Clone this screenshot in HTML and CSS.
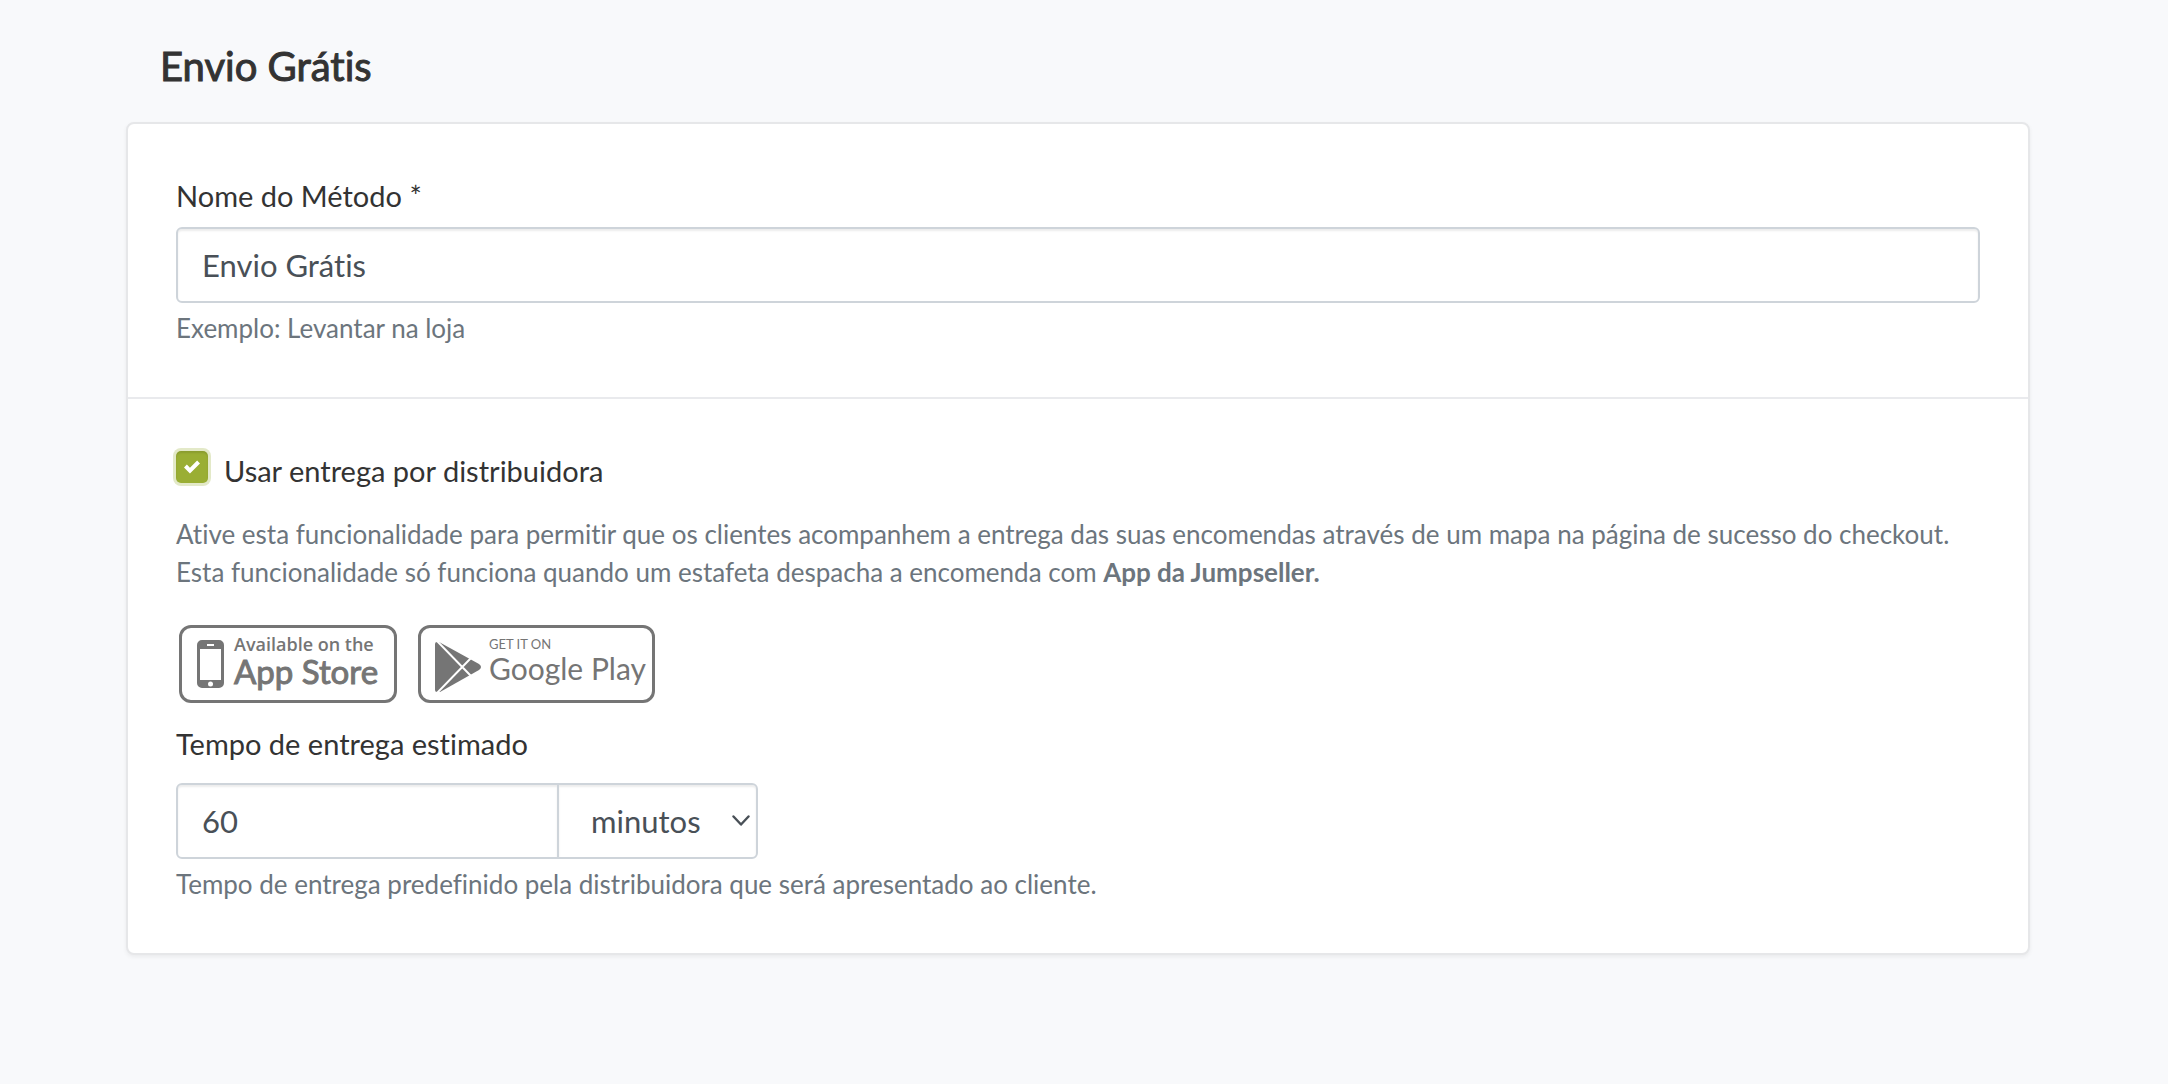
FILE: index.html
```
<!DOCTYPE html>
<html lang="pt">
<head>
    <meta charset="UTF-8">
    <meta name="viewport" content="width=device-width, initial-scale=1.0">
    <title>Envio Grátis</title>
    <link rel="stylesheet" href="styles.css">
</head>
<body>

    <main class="container">
        <h1>Envio Grátis</h1>

        <form class="card">
            <section class="card-section">
                <label class="form-label" for="name">Nome do Método *</label>
                <input class="form-control" type="text" id="name" name="name" value="Envio Grátis" required>
                <p class="form-text">Exemplo: Levantar na loja</p>
            </section>

            <section class="card-section">
                <div class="form-check">
                    <input type="checkbox" id="delivery" name="delivery" checked>
                    <label for="delivery">Usar entrega por distribuidora</label>
                </div>

                <p class="description">Ative esta funcionalidade para permitir que os clientes acompanhem a entrega das suas encomendas através de um mapa na página de sucesso do checkout.<br>
                Esta funcionalidade só funciona quando um estafeta despacha a encomenda com <strong>App da Jumpseller.</strong></p>

                <div class="stores">
                    <a class="store app-store" href="#">
                        <svg class="phone-icon" width="27" height="48" viewBox="0 0 27 48" aria-hidden="true">
                            <path fill="#757575" fill-rule="evenodd" d="M5 0h17a5 5 0 0 1 5 5v38a5 5 0 0 1-5 5H5a5 5 0 0 1-5-5V5a5 5 0 0 1 5-5zM3 9v31h21V9zM10 4v2h7V4z"/>
                            <circle cx="13.5" cy="44" r="2.5" fill="#fff"/>
                        </svg>
                        <span class="store-text">
                            <span class="store-small">Available on the</span>
                            <span class="store-name">App Store</span>
                        </span>
                    </a>
                    <a class="store google-play" href="#">
                        <svg class="play-icon" width="47" height="50" viewBox="0 0 47 50" aria-hidden="true">
                            <path fill="#757575" d="M0 2Q0 0 2 0h2l40 22q4 3 0 6L5 50H2q-2 0-2-2z"/>
                            <path fill="none" stroke="#fff" stroke-width="2" d="M2-1l34 35M2 51l34-35"/>
                        </svg>
                        <span class="store-text">
                            <span class="store-small">GET IT ON</span>
                            <span class="store-name">Google Play</span>
                        </span>
                    </a>
                </div>

                <label class="form-label" for="time">Tempo de entrega estimado</label>
                <div class="input-group">
                    <input class="form-control" type="text" id="time" name="time" value="60">
                    <select class="form-control" name="unit" aria-label="Unidade">
                        <option selected>minutos</option>
                        <option>horas</option>
                        <option>dias</option>
                    </select>
                    <svg class="chevron" width="18" height="12" viewBox="0 0 18 12" aria-hidden="true">
                        <path d="M1.500 1.500L9 9.500l7.500-8" fill="none" stroke="#495057" stroke-width="2.400" stroke-linecap="round" stroke-linejoin="round"/>
                    </svg>
                </div>
                <p class="form-text">Tempo de entrega predefinido pela distribuidora que será apresentado ao cliente.</p>
            </section>
        </form>
    </main>

</body>
</html>
```
FILE: styles.css
```
* {
    box-sizing: border-box;
}

body {
    margin: 0;
    background-color: #f8f9fb;
    font-family: Lato, "Liberation Sans", sans-serif;
    font-size: 29px;
    line-height: 40px;
    font-variant-ligatures: none;
    color: #333;
}

.container {
    padding: 42px 138px 42px 126px;
}

h1 {
    margin: 0 0 32px;
    padding: 0 34px;
    font-size: 40px;
    line-height: 48px;
    font-weight: 400;
    -webkit-text-stroke: 1px #333;
}

/* Caixa principal */
.card {
    background-color: #fff;
    border: 2px solid #e6e7e9;
    border-radius: 8px;
    box-shadow: 0 2px 4px rgba(0, 0, 0, 0.06);
}

.card-section {
    padding: 52px 48px 50px;
}

.card-section + .card-section {
    border-top: 2px solid #e9eaed;
}

.form-label {
    display: block;
    margin-bottom: 11px;
}

/* Campos */
.form-control {
    display: block;
    width: 100%;
    height: 76px;
    padding: 0 24px;
    border: 2px solid #ced4da;
    border-radius: 6px;
    background-color: #fff;
    box-shadow: inset 0 2px 2px rgba(0, 0, 0, 0.075);
    font-family: inherit;
    font-size: 31px;
    font-variant-ligatures: none;
    color: #495057;
}

.form-text {
    margin: 6px 0 0;
    font-size: 26px;
    line-height: 38px;
    color: #6c757d;
}

/* Checkbox */
.form-check {
    display: flex;
    align-items: flex-start;
    gap: 16px;
}

.form-check input {
    appearance: none;
    flex: none;
    width: 32px;
    height: 32px;
    margin: 0;
    border-radius: 5px;
    background: #9aae34 url("data:image/svg+xml,%3Csvg xmlns='http://www.w3.org/2000/svg' viewBox='0 0 8 8'%3E%3Cpath fill='%23fff' d='M6.564.75l-3.590 3.612-1.538-1.550L0 4.260 2.974 7.250 8 2.193z'/%3E%3C/svg%3E") center / 16px no-repeat;
    box-shadow: 0 0 0 3px #e3e9c8, inset 0 2px 2px rgba(0, 0, 0, 0.1);
}

.description {
    margin: 24px 0 34px;
    font-size: 26px;
    line-height: 38px;
    color: #6c757d;
}

/* Botões das lojas */
.stores {
    display: flex;
    gap: 21px;
    margin: 0 0 21px 3px;
}

.store {
    display: flex;
    align-items: center;
    height: 78px;
    border: 3px solid #757575;
    border-radius: 12px;
    color: #757575;
    text-decoration: none;
    white-space: nowrap;
}

.store-text {
    padding-bottom: 8px;
}

.store-small,
.store-name {
    display: block;
}

.app-store {
    width: 218px;
    gap: 10px;
    padding-left: 15px;
}

.app-store .store-small {
    font-family: "Open Sans", sans-serif;
    font-size: 18px;
    line-height: 22px;
    font-weight: 600;
}

.app-store .store-name {
    font-size: 33px;
    line-height: 32px;
    -webkit-text-stroke: 1px #757575;
}

.google-play {
    width: 237px;
    gap: 7px;
    padding-left: 14px;
}

.play-icon {
    margin-top: 5px;
}

.google-play .store-small {
    font-size: 13px;
    line-height: 16px;
}

.google-play .store-name {
    font-size: 30px;
    line-height: 32px;
}

/* Tempo de entrega */
.input-group {
    display: flex;
    align-items: center;
    position: relative;
    width: 582px;
    margin-top: 19px;
}

.input-group input {
    flex: 1;
    min-width: 0;
    border-top-right-radius: 0;
    border-bottom-right-radius: 0;
}

.input-group select {
    appearance: none;
    width: 201px;
    margin-left: -2px;
    padding: 0 32px;
    border-top-left-radius: 0;
    border-bottom-left-radius: 0;
}

.chevron {
    position: absolute;
    right: 8px;
    pointer-events: none;
}
```
